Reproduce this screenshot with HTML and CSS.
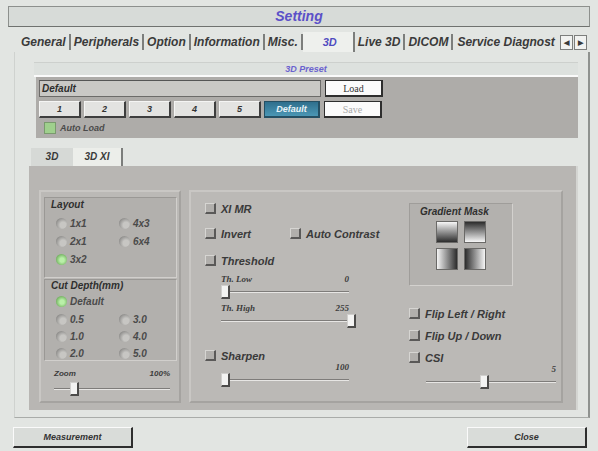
FILE: index.html
```html
<!DOCTYPE html>
<html lang="en">
<head>
    <meta charset="UTF-8">
    <title>Setting</title>
    <link rel="stylesheet" href="styles.css">
</head>
<body>

<div class="window">
    <div class="title-bar">Setting</div>

    <nav class="tabs">
        <span class="tab">General</span>
        <span class="tab">Peripherals</span>
        <span class="tab">Option</span>
        <span class="tab">Information</span>
        <span class="tab">Misc.</span>
        <span class="tab tab-active">3D</span>
        <span class="tab">Live 3D</span>
        <span class="tab">DICOM</span>
        <span class="tab tab-last">Service Diagnost</span>
        <span class="tab-arrows">
            <span class="arrow">&#9664;</span>
            <span class="arrow">&#9654;</span>
        </span>
    </nav>

    <main class="main-panel">
        <div class="preset-head">3D Preset</div>
        <div class="preset-box">
            <div class="preset-row">
                <div class="preset-name">Default</div>
                <button class="btn btn-white">Load</button>
            </div>
            <div class="preset-row">
                <div class="preset-nums">
                    <button class="btn">1</button>
                    <button class="btn">2</button>
                    <button class="btn">3</button>
                    <button class="btn">4</button>
                    <button class="btn">5</button>
                    <button class="btn btn-blue">Default</button>
                </div>
                <button class="btn btn-white btn-dim">Save</button>
            </div>
            <label class="auto-load"><span class="check check-green"></span>Auto Load</label>
        </div>

        <div class="sub-tabs">
            <span class="sub-tab">3D</span>
            <span class="sub-tab sub-tab-active">3D XI</span>
        </div>

        <section class="sub-panel">
            <div class="box box-left">
                <div class="group group-layout">
                    <div class="group-title">Layout</div>
                    <div class="radio-grid">
                        <label class="opt"><span class="radio"></span>1x1</label>
                        <label class="opt"><span class="radio"></span>4x3</label>
                        <label class="opt"><span class="radio"></span>2x1</label>
                        <label class="opt"><span class="radio"></span>6x4</label>
                        <label class="opt"><span class="radio radio-on"></span>3x2</label>
                    </div>
                </div>
                <div class="group group-depth">
                    <div class="group-title">Cut Depth(mm)</div>
                    <label class="opt opt-default"><span class="radio radio-on"></span>Default</label>
                    <div class="radio-grid">
                        <label class="opt"><span class="radio"></span>0.5</label>
                        <label class="opt"><span class="radio"></span>3.0</label>
                        <label class="opt"><span class="radio"></span>1.0</label>
                        <label class="opt"><span class="radio"></span>4.0</label>
                        <label class="opt"><span class="radio"></span>2.0</label>
                        <label class="opt"><span class="radio"></span>5.0</label>
                    </div>
                </div>
                <div class="zoom">
                    <div class="slider-labels"><span>Zoom</span><span>100%</span></div>
                    <div class="slider"><span class="thumb" style="left: 16px"></span></div>
                </div>
            </div>

            <div class="box box-main">
                <div class="col-filters">
                    <label class="chk chk-first"><span class="check"></span>XI MR</label>
                    <div class="chk-row">
                        <label class="chk"><span class="check"></span>Invert</label>
                        <label class="chk"><span class="check"></span>Auto Contrast</label>
                    </div>
                    <label class="chk"><span class="check"></span>Threshold</label>
                    <div class="slider-block">
                        <div class="slider-labels serif"><span>Th. Low</span><span>0</span></div>
                        <div class="slider"><span class="thumb" style="left: 0"></span></div>
                    </div>
                    <div class="slider-block">
                        <div class="slider-labels serif"><span>Th. High</span><span>255</span></div>
                        <div class="slider"><span class="thumb" style="left: 126px"></span></div>
                    </div>
                    <label class="chk chk-sharpen"><span class="check"></span>Sharpen</label>
                    <div class="slider-block slider-near">
                        <div class="slider-labels serif"><span></span><span>100</span></div>
                        <div class="slider"><span class="thumb" style="left: 0"></span></div>
                    </div>
                </div>

                <div class="col-mask">
                    <div class="mask-box">
                        <div class="mask-title">Gradient Mask</div>
                        <div class="mask-grid">
                            <span class="tile tile-a"></span>
                            <span class="tile tile-b"></span>
                            <span class="tile tile-c"></span>
                            <span class="tile tile-d"></span>
                        </div>
                    </div>
                    <label class="chk chk-flip"><span class="check"></span>Flip Left / Right</label>
                    <label class="chk"><span class="check"></span>Flip Up / Down</label>
                    <label class="chk"><span class="check"></span>CSI</label>
                    <div class="slider-block slider-csi">
                        <div class="slider-labels serif"><span></span><span>5</span></div>
                        <div class="slider"><span class="thumb" style="left: 54px"></span></div>
                    </div>
                </div>
            </div>
        </section>
    </main>

    <footer class="footer">
        <button class="btn btn-foot">Measurement</button>
        <button class="btn btn-foot">Close</button>
    </footer>
</div>

</body>
</html>
```

FILE: styles.css
```css
body {
    margin: 0;
    background-color: #e2e5e2;
    font: italic bold 10px 'Liberation Sans', Arial, sans-serif;
    color: #3a3a3a;
}

.window {
    width: 598px;
    height: 451px;
    padding: 6px 8px 0 8px;
    box-sizing: border-box;
    overflow: hidden;
}

.title-bar {
    height: 19px;
    border: 1px solid #8d908d;
    border-bottom-color: #6f726f;
    background-color: #d7dbd8;
    color: #5b50c8;
    font-size: 14px;
    line-height: 19px;
    text-align: center;
}

.tabs {
    display: flex;
    align-items: center;
    height: 20px;
    margin: 5px 0 0 10px;
    font-size: 12px;
    white-space: nowrap;
}

.tab {
    padding: 0 3px 0 3px;
    border-right: 2px solid #7c7e7c;
    line-height: 16px;
}

.tab-active {
    width: 30px;
    padding: 0 8px 0 12px;
    align-self: stretch;
    line-height: 20px;
    background-color: #eef0ed;
    color: #4f4bc0;
    font-size: 11px;
    text-align: center;
}

.tab-last {
    padding-left: 4px;
    border-right: none;
}

.tab-arrows {
    display: flex;
    gap: 1px;
    margin-left: 2px;
}

.arrow {
    width: 11px;
    height: 13px;
    border: 1px solid #7c7e7c;
    background-color: #f1f2f0;
    font-size: 7px;
    font-style: normal;
    line-height: 13px;
    text-align: center;
}

.main-panel {
    margin-left: 6px;
    height: 366px;
    padding: 10px 10px 0 19px;
    border-right: 2px solid #8f928f;
    border-left: 1px solid #cfd2cf;
    border-bottom: 1px solid #a9aca9;
    box-sizing: border-box;
}

.preset-head {
    height: 12px;
    border-top: 1px solid #cdd0cd;
    border-bottom: 2px solid #fafafa;
    background-color: #dde1de;
    color: #6a62cf;
    font-size: 9px;
    line-height: 12px;
    text-align: center;
}

.preset-box {
    height: 61px;
    margin-left: 2px;
    padding: 3px 3px 0 3px;
    box-sizing: border-box;
    background-color: #aeaca9;
}

.preset-row {
    display: flex;
    gap: 4px;
    margin-bottom: 4px;
}

.preset-name {
    width: 278px;
    height: 15px;
    border: 1px solid #6c6b69;
    border-top-color: #555;
    background-color: #c9c8c5;
    font-size: 10px;
    line-height: 15px;
    padding-left: 2px;
    color: #2d2d2d;
}

.preset-nums {
    display: flex;
    gap: 3px;
    width: 281px;
}

.btn {
    flex: 1;
    height: 17px;
    padding: 0;
    border: 1px solid #3e3e3e;
    border-right-width: 2px;
    border-bottom-width: 2px;
    border-top-color: #f5f5f4;
    border-left-color: #f5f5f4;
    background-color: #e3e3e1;
    font: italic bold 9px 'Liberation Sans', Arial, sans-serif;
    color: #333;
    box-sizing: border-box;
}

.btn-blue {
    flex: 0 0 56px;
    border-color: #254f63;
    background: linear-gradient(#2f6f8d, #4b97b5);
    color: #eaf4f8;
}

.btn-white {
    flex: 0 0 58px;
    border: 2px solid #2e2e2e;
    border-top-width: 1px;
    border-left-width: 1px;
    background-color: #fbfbfb;
    font-style: normal;
    font-weight: normal;
    font-family: 'Liberation Serif', serif;
    font-size: 10px;
}

.btn-dim {
    color: #a9a9a9;
}

.auto-load {
    display: flex;
    align-items: center;
    gap: 4px;
    margin-left: 5px;
    font-size: 9px;
    color: #4a4a4a;
}

.check {
    display: inline-block;
    width: 8px;
    height: 8px;
    border: 1px solid #d6d5d2;
    border-right: 2px solid #5a5958;
    border-bottom: 2px solid #5a5958;
    background-color: #b1afac;
}

.check-green {
    width: 10px;
    height: 10px;
    border: 1px solid #7a9a6e;
    background-color: #9fd08d;
}

.sub-tabs {
    display: flex;
    height: 18px;
    margin: 10px 0 0 -3px;
    font-size: 10px;
}

.sub-tab {
    width: 42px;
    background-color: #d6d9d6;
    line-height: 18px;
    text-align: center;
}

.sub-tab-active {
    width: 48px;
    background-color: #eceeea;
    border-right: 2px solid #7b7d7b;
}

.sub-panel {
    display: flex;
    gap: 8px;
    height: 244px;
    margin-left: -5px;
    padding: 24px 13px 7px 10px;
    box-sizing: border-box;
    background-color: #b8b6b3;
    border-right: 2px solid #d4d5d2;
}

.box {
    border: 2px solid #c9c7c4;
    border-right-color: #a5a3a0;
    border-bottom-color: #a5a3a0;
    background-color: #bbb9b6;
    box-sizing: border-box;
}

.box-left {
    width: 142px;
    padding: 5px 2px 0 3px;
}

.group {
    border: 1px solid #9a9895;
    border-right-color: #d1cfcc;
    border-bottom-color: #d1cfcc;
    background-color: #b2b0ad;
    padding: 1px 6px 0 6px;
    box-sizing: border-box;
}

.group-layout {
    height: 81px;
}

.group-depth {
    height: 82px;
    margin-top: 1px;
    padding-top: 0;
}

.group-title {
    height: 12px;
    font-size: 10px;
    color: #2f2f2f;
    margin-bottom: 6px;
}

.group-depth .group-title {
    margin-bottom: 3px;
}

.radio-grid {
    display: grid;
    grid-template-columns: 63px 60px;
    row-gap: 5px;
    margin-left: 5px;
}

.group-depth .radio-grid {
    row-gap: 4px;
}

.opt {
    display: flex;
    align-items: center;
    gap: 3px;
    height: 13px;
    font-size: 10px;
    color: #4a4a4a;
}

.opt-default {
    margin: 0 0 5px 5px;
}

.radio {
    display: inline-block;
    width: 11px;
    height: 11px;
    border-radius: 50%;
    background: radial-gradient(circle at 65% 65%, #c7c6c3 30%, #8e8d8b 75%);
}

.radio-on {
    background: radial-gradient(circle at 55% 55%, #b9efa8 25%, #5fa04c 85%);
}

.zoom {
    padding: 8px 7px 0 10px;
}

.slider-labels {
    display: flex;
    justify-content: space-between;
    font-size: 8px;
    color: #3c3c3c;
    height: 10px;
}

.serif {
    font-family: 'Liberation Serif', serif;
    font-size: 9px;
}

.slider {
    position: relative;
    height: 14px;
    margin-top: 1px;
    background: linear-gradient(transparent 6px, #7e7c7a 6px, #7e7c7a 7px, #e7e6e4 7px, #e7e6e4 8px, transparent 8px);
}

.zoom .slider {
    margin-top: 3px;
}

.thumb {
    position: absolute;
    top: 0;
    width: 6px;
    height: 11px;
    background-color: #f3f3f2;
    border: 1px solid #d0cfcd;
    border-right: 2px solid #4c4b4a;
    border-bottom: 2px solid #4c4b4a;
}

.box-main {
    flex: 1;
    display: flex;
    padding: 10px 0 0 14px;
}

.col-filters {
    width: 204px;
    display: flex;
    flex-direction: column;
}

.chk {
    display: flex;
    align-items: center;
    gap: 5px;
    height: 13px;
    font-size: 11px;
    color: #3a3a3a;
}

.chk-first {
    margin-bottom: 12px;
}

.chk-row {
    display: flex;
    gap: 39px;
    margin-bottom: 14px;
}

.slider-block {
    width: 128px;
    margin: 7px 0 0 16px;
}

.slider-block + .slider-block {
    margin-top: 4px;
}

.chk-sharpen {
    margin-top: 21px;
}

.slider-block.slider-near {
    margin-top: 0;
}

.col-mask {
    display: flex;
    flex-direction: column;
}

.mask-box {
    width: 104px;
    height: 83px;
    margin: 1px 0 0 0;
    border: 1px solid #9f9d9a;
    border-right-color: #d3d1ce;
    border-bottom-color: #d3d1ce;
    background-color: #b3b1ae;
    box-sizing: border-box;
}

.mask-title {
    font-size: 10px;
    color: #2f2f2f;
    padding: 2px 0 0 10px;
}

.mask-grid {
    display: grid;
    grid-template-columns: 22px 22px;
    gap: 5px 6px;
    justify-content: center;
    margin-top: 4px;
}

.tile {
    height: 22px;
    border: 1px solid #6a6967;
    box-sizing: border-box;
}

.tile-a {
    background: linear-gradient(#f7f7f7, #2c2c2c);
}

.tile-b {
    background: linear-gradient(#2c2c2c, #f7f7f7);
}

.tile-c {
    background: linear-gradient(to right, #f5f5f5, #2c2c2c);
}

.tile-d {
    background: linear-gradient(to right, #2c2c2c, #f5f5f5);
}

.col-mask .chk {
    margin-bottom: 9px;
}

.col-mask .chk-flip {
    margin-top: 21px;
}

.slider-csi {
    width: 130px;
    margin: -9px 0 0 17px;
}

.footer {
    display: flex;
    justify-content: space-between;
    margin: 9px 3px 0 5px;
}

.btn-foot {
    flex: 0 0 120px;
    height: 21px;
    border: 1px solid #2e2e2e;
    border-right-width: 2px;
    border-bottom-width: 2px;
    border-top-color: #fafafa;
    border-left-color: #fafafa;
    background-color: #d9dcd9;
    font-size: 9px;
    color: #333;
}
```
